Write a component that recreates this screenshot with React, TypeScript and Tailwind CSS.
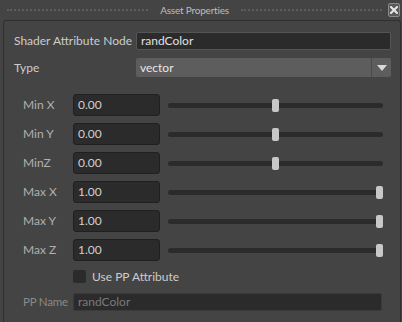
import React from "react";

type Row = { label: string; value: string; pos: number };

const rows: Row[] = [
  { label: "Min X", value: "0.00", pos: 0.5 },
  { label: "Min Y", value: "0.00", pos: 0.5 },
  { label: "MinZ", value: "0.00", pos: 0.5 },
  { label: "Max X", value: "1.00", pos: 1 },
  { label: "Max Y", value: "1.00", pos: 1 },
  { label: "Max Z", value: "1.00", pos: 1 },
];

function Slider({ pos }: { pos: number }) {
  return (
    <div className="relative ml-[8px] h-[22px] w-[215px]">
      <div className="absolute left-0 right-0 top-[9px] h-[5px] rounded-full bg-[#2b2b2b]" />
      <div
        className="absolute top-[5px] h-[13px] w-[7px] rounded-[2px] bg-[#c8c8c8]"
        style={{ left: `${pos * 208}px` }}
      />
    </div>
  );
}

export default function App() {
  return (
    <div className="h-[322px] w-[402px] overflow-hidden whitespace-nowrap bg-[#444444] font-['Lato','Noto_Sans',sans-serif] text-[12px]">
      {/* title bar */}
      <div className="flex h-[20px] items-center pl-[7px] pr-[2px]">
        <div className="h-0 flex-1 border-t-2 border-dotted border-[#5e5e5e]" />
        <span className="px-[12px] text-[10px] tracking-[-0.2px] text-[#bdbdbd]">Asset Properties</span>
        <div className="h-0 flex-1 border-t-2 border-dotted border-[#5e5e5e]" />
        <div className="ml-[6px] flex h-[14px] w-[12px] items-center justify-center rounded-[2px] border border-[#8a8a8a] bg-[#5a5a5a]">
          <svg width="8" height="8" viewBox="0 0 8 8">
            <path d="M1 1 L7 7 M7 1 L1 7" stroke="#e8e8e8" strokeWidth="2" strokeLinecap="square" />
          </svg>
        </div>
      </div>

      {/* frame */}
      <div className="ml-[3px] mr-[1px] h-[302px] rounded-t-[3px] border border-b-0 border-[#2f2f2f] pl-[10px] pr-[9px] pt-[11px]">
        <div className="flex h-[18px] items-center">
          <span className="w-[122px] text-[#cccccc]">Shader Attribute Node</span>
          <div className="flex h-[18px] flex-1 items-center rounded-[2px] border border-[#555] bg-[#2b2b2b] px-[4px] text-[#e0e0e0]">
            randColor
          </div>
        </div>
        <div className="mt-[8px] flex h-[19px] items-center">
          <span className="w-[122px] text-[#cccccc]">Type</span>
          <div className="flex h-[19px] flex-1 items-center rounded-[2px] bg-[#5d5d5d]">
            <span className="flex-1 px-[4px] text-[#e6e6e6]">vector</span>
            <div className="flex h-full w-[20px] items-center justify-center border-l border-[#4a4a4a]">
              <svg width="10" height="6" viewBox="0 0 10 6">
                <path d="M0 0 L10 0 L5 6 Z" fill="#d8d8d8" />
              </svg>
            </div>
          </div>
        </div>

        <div className="mt-[17px] flex flex-col gap-[7px] pl-[9px]">
          {rows.map((r) => (
            <div key={r.label} className="flex h-[22px] items-center">
              <span className="w-[50px] text-[#b0b0b0]">{r.label}</span>
              <div className="flex h-[22px] w-[87px] items-center rounded-[3px] border border-[#202020] bg-[#2b2b2b] px-[4px] text-[#d0d0d0]">
                {r.value}
              </div>
              <Slider pos={r.pos} />
            </div>
          ))}
        </div>

        <div className="ml-[59px] mt-[9px] flex h-[13px] items-center">
          <div className="h-[13px] w-[13px] rounded-[2px] bg-[#2b2b2b]" />
          <span className="ml-[6px] text-[#cccccc]">Use PP Attribute</span>
        </div>

        <div className="mt-[10px] flex h-[18px] items-center pl-[9px]">
          <span className="w-[50px] text-[11.5px] tracking-[-0.2px] text-[#8a8a8a]">PP Name</span>
          <div className="flex h-[18px] w-[309px] items-center rounded-[2px] border border-[#3a3a3a] bg-[#2b2b2b] px-[4px] text-[#7a7a7a]">
            randColor
          </div>
        </div>
      </div>
    </div>
  );
}
